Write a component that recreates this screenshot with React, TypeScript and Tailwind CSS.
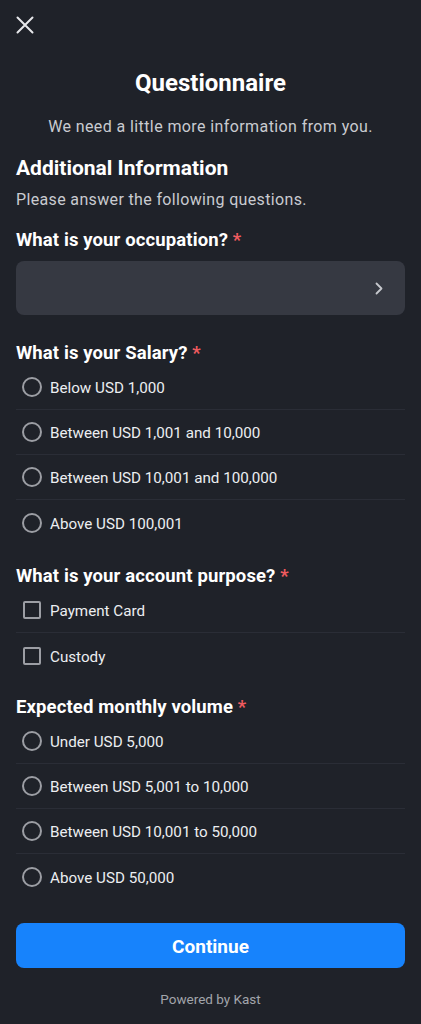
import React from "react";

const salary = [
  "Below USD 1,000",
  "Between USD 1,001 and 10,000",
  "Between USD 10,001 and 100,000",
  "Above USD 100,001",
];

const purposes = ["Payment Card", "Custody"];

const volumes = [
  "Under USD 5,000",
  "Between USD 5,001 to 10,000",
  "Between USD 10,001 to 50,000",
  "Above USD 50,000",
];

function Label({ text, className = "" }: { text: string; className?: string }) {
  return (
    <div className={`text-[18.5px] leading-[24px] font-bold tracking-[0.12px] text-white ${className}`}>
      {text} <span className="text-[#ef5b5f]">*</span>
    </div>
  );
}

function OptionRow({ label, kind, last }: { label: string; kind: "radio" | "check"; last: boolean }) {
  return (
    <div
      className={`flex h-[45px] items-center gap-2 pl-[6px] ${last ? "" : "border-b border-[#2a2d36]"}`}
    >
      <div className="flex h-5 w-5 items-center justify-center">
        {kind === "radio" ? (
          <div className="h-5 w-5 rounded-full border-2 border-[#9c9ea4]" />
        ) : (
          <div className="h-[18px] w-[18px] rounded-[2px] border-2 border-[#9c9ea4]" />
        )}
      </div>
      <span className="pt-[2px] text-[15.2px] leading-[22px] text-[#eceef1]">{label}</span>
    </div>
  );
}

function OptionList({ items, kind }: { items: string[]; kind: "radio" | "check" }) {
  return (
    <div className="flex flex-col">
      {items.map((it, i) => (
        <OptionRow key={it} label={it} kind={kind} last={i === items.length - 1} />
      ))}
    </div>
  );
}

export default function App() {
  return (
    <div
      className="min-h-screen bg-[#1f2229] px-4"
      style={{ fontFamily: "Roboto, 'Liberation Sans', sans-serif" }}
    >
      <div className="pt-4">
        <svg width="18" height="18" viewBox="0 0 18 18" fill="none">
          <path d="M1.5 1.5 L16.5 16.5 M16.5 1.5 L1.5 16.5" stroke="#e6e7ea" strokeWidth="2" strokeLinecap="round" />
        </svg>
      </div>

      <h1 className="mt-[35px] text-center text-[24px] leading-[28px] font-bold text-white">Questionnaire</h1>
      <p className="mt-[19px] text-center text-[16px] leading-[22px] tracking-[0.4px] text-[#c9cbd0]">
        We need a little more information from you.
      </p>

      <h2 className="mt-4 text-[21px] leading-[28px] font-bold text-white">Additional Information</h2>
      <p className="mt-[7px] text-[16px] leading-[22px] tracking-[0.35px] text-[#c9cbd0]">
        Please answer the following questions.
      </p>

      <Label text="What is your occupation?" className="mt-[17px]" />
      <button className="mt-[9px] flex h-[54px] w-full items-center justify-end rounded-lg bg-[#363942] pr-[21px]">
        <svg width="9" height="13" viewBox="0 0 9 13" fill="none">
          <path d="M1.5 1.5 L6.5 6.5 L1.5 11.5" stroke="#c6c8cd" strokeWidth="1.8" strokeLinecap="round" strokeLinejoin="round" />
        </svg>
      </button>

      <Label text="What is your Salary?" className="mt-[26px]" />
      <OptionList items={salary} kind="radio" />

      <Label text="What is your account purpose?" className="mt-[19px]" />
      <OptionList items={purposes} kind="check" />

      <Label text="Expected monthly volume" className="mt-[17px]" />
      <OptionList items={volumes} kind="radio" />

      <button className="mt-6 flex h-[45px] w-full items-center justify-center rounded-lg bg-[#1783fc] pt-[3px] text-[19px] font-bold text-white">
        Continue
      </button>
      <p className="mt-[21px] pb-4 text-center text-[13.5px] leading-[20px] text-[#a2a5ab]">Powered by Kast</p>
    </div>
  );
}
